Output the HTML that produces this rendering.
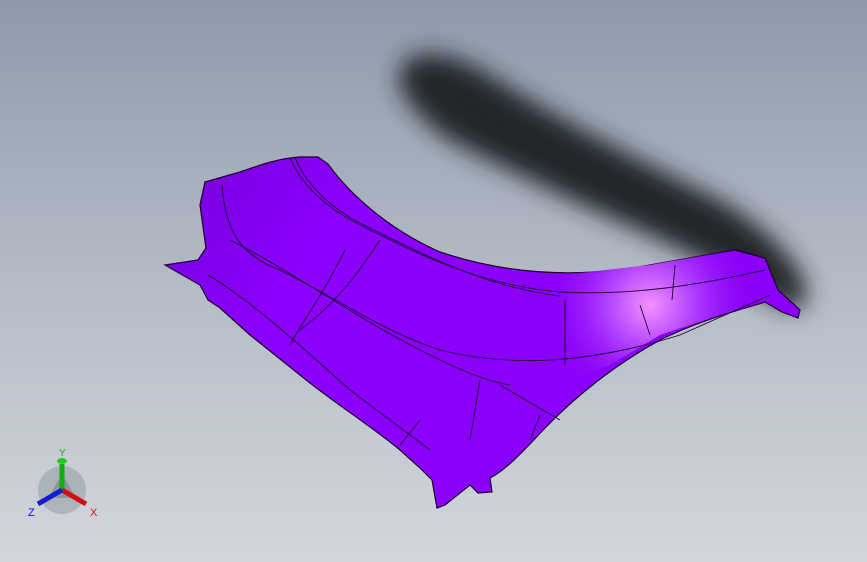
<!DOCTYPE html>
<html><head><meta charset="utf-8"><style>
html,body{margin:0;padding:0;width:867px;height:562px;overflow:hidden}
body{background:linear-gradient(180deg,#8e9aab 0%,#b4bbc6 50%,#d3d6dc 100%)}
svg{position:absolute;left:0;top:0}
</style></head><body>
<svg width="867" height="562" viewBox="0 0 867 562">
<defs>
<filter id="bl" x="-30%" y="-30%" width="160%" height="160%"><feGaussianBlur stdDeviation="12"/></filter>
<radialGradient id="hl" cx="650" cy="305" r="110" gradientUnits="userSpaceOnUse">
<stop offset="0" stop-color="#f590ff"/><stop offset="0.4" stop-color="#b040ff"/><stop offset="1" stop-color="#8a00f5" stop-opacity="0"/></radialGradient>
<linearGradient id="pg" x1="200" y1="170" x2="600" y2="450" gradientUnits="userSpaceOnUse">
<stop offset="0" stop-color="#7a00e0"/><stop offset="0.3" stop-color="#8c00ff"/><stop offset="1" stop-color="#8a00f8"/></linearGradient>
</defs>
<path d="M400 70 C410 45 450 50 490 75 C560 120 640 160 720 200 C780 235 815 280 805 305 C790 315 770 300 740 282 C680 245 600 215 530 180 C470 150 440 140 420 115 C405 98 395 85 400 70Z" fill="#24272c" filter="url(#bl)"/>
<path d="M165 265 L198 260 L206 248 L200 205 L205 182 L240 172 C260 165 280 158 300 157 L318 157 L328 164 C350 195 390 230 440 252 C500 272 570 280 650 265 L735 250 L765 258 L778 290 L800 310 L798 318 L782 312 L765 302 C740 310 700 320 660 340 C620 362 580 392 545 428 C520 455 505 470 490 478 L492 492 L478 493 L470 485 L445 505 L437 508 L432 480 L420 468 L400 450 C370 425 330 400 300 375 L250 335 L220 308 L208 300 L200 285 Z" fill="url(#pg)" stroke="#1a0030" stroke-width="1.2"/>
<path d="M560 275 L650 265 L735 250 L765 258 L778 290 L760 305 L720 315 L660 335 L610 365 L570 380 L560 320 Z" fill="url(#hl)"/>
<g fill="none" stroke="#1a0030" stroke-width="0.9">
<path d="M290 158 C300 180 320 205 360 225 C420 255 480 285 560 292 C630 296 700 285 765 270"/>
<path d="M295 158 C305 182 330 210 370 228 C430 258 490 288 560 296"/>
<path d="M222 185 C225 230 240 255 280 270 C340 300 380 330 440 350 C520 370 600 360 680 335 L770 295"/>
<path d="M230 240 C290 270 360 320 420 350 C450 365 480 380 510 385"/>
<path d="M208 275 C250 300 300 345 350 390 L430 450"/>
<path d="M380 240 C360 270 340 300 300 330"/>
<path d="M345 250 C320 300 300 325 290 345"/>
<path d="M565 300 L565 365"/><path d="M672 300 L675 265"/><path d="M640 305 L650 335"/>
<path d="M480 380 L470 440"/><path d="M500 385 L560 420"/><path d="M420 420 L400 445"/>
<path d="M540 415 L530 440"/>
</g>
<g transform="translate(62,490)">
<circle r="24" fill="#9aa0a8" opacity="0.6"/>
<path d="M0 -16 L14 8 L-14 8Z" fill="#7a8088" opacity="0.6"/>
<line x1="0" y1="0" x2="0" y2="-26" stroke="#10b010" stroke-width="5"/>
<ellipse cx="0" cy="-29" rx="5" ry="3" fill="#20d020"/>
<line x1="0" y1="0" x2="24" y2="14" stroke="#d01010" stroke-width="5"/>
<line x1="0" y1="0" x2="-24" y2="14" stroke="#1020d0" stroke-width="5"/>
<text x="-3" y="-34" font-family="Liberation Sans,sans-serif" font-size="10" fill="#10c010">Y</text>
<text x="28" y="26" font-family="Liberation Sans,sans-serif" font-size="11" fill="#e01010">X</text>
<text x="-34" y="26" font-family="Liberation Sans,sans-serif" font-size="11" fill="#1010e0">Z</text>
</g>
</svg>
</body></html>
